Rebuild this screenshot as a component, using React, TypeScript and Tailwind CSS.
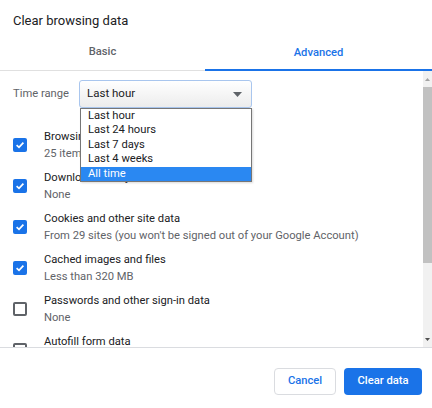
import React from 'react';

const rows = [
  { title: 'Browsing history', sub: '25 items', checked: true },
  { title: 'Download history', sub: 'None', checked: true },
  { title: 'Cookies and other site data', sub: "From 29 sites (you won't be signed out of your Google Account)", checked: true },
  { title: 'Cached images and files', sub: 'Less than 320 MB', checked: true },
  { title: 'Passwords and other sign-in data', sub: 'None', checked: false },
  { title: 'Autofill form data', sub: 'None', checked: false },
];

const options = ['Last hour', 'Last 24 hours', 'Last 7 days', 'Last 4 weeks', 'All time'];

function Checkbox({ checked }: { checked: boolean }) {
  if (!checked) {
    return <div className="w-[14px] h-[14px] rounded-[2px] border-2 border-[#5f6368] shrink-0" />;
  }
  return (
    <div className="w-[14px] h-[14px] rounded-[2px] bg-[#1a73e8] shrink-0 flex items-center justify-center">
      <svg width="10" height="10" viewBox="0 0 10 10">
        <path d="M1.6 5.2 L4 7.4 L8.4 2.6" fill="none" stroke="white" strokeWidth="1.7" />
      </svg>
    </div>
  );
}

export default function App() {
  return (
    <div className="w-[432px] h-[408px] bg-white relative overflow-hidden text-[#202124] font-['Roboto',sans-serif]">
      <div className="px-[13px] pt-[12px] h-[36px] text-[13px] leading-[18px]">Clear browsing data</div>

      {/* tabs */}
      <div className="flex h-[35px] border-b border-[#e0e0e0] text-[11.2px] font-medium">
        <div className="w-[205px] flex items-center justify-center text-[#5f6368] pb-[1px]">Basic</div>
        <div className="flex-1 flex items-center justify-center text-[#1a73e8] border-b-2 border-[#1a73e8] mb-[-1px] pt-[1px]">
          Advanced
        </div>
      </div>

      {/* scrolling body */}
      <div className="flex h-[277px] border-b border-[#dadce0]">
        <div className="flex-1 overflow-hidden relative">
          <div className="flex items-center pt-[9px] pl-[13px] h-[37px]">
            <span className="text-[11.2px] text-[#5f6368] w-[66px]">Time range</span>
            <div className="w-[173px] h-[28px] rounded-[3px] border border-[#a9c6ee] bg-gradient-to-b from-white to-[#ececec] flex items-center justify-between pl-[7px] pr-[9px] text-[11.5px]">
              <span>Last hour</span>
              <svg width="9" height="5" viewBox="0 0 9 5">
                <path d="M0 0 H9 L4.5 5 Z" fill="#5f6368" />
              </svg>
            </div>
          </div>

          <div className="mt-[16px]">
            {rows.map((r) => (
              <div key={r.title} className="flex items-center h-[41px] pl-[13px]">
                <Checkbox checked={r.checked} />
                <div className="ml-[17px] text-[11.2px] leading-[17px] whitespace-nowrap">
                  <div>{r.title}</div>
                  <div className="text-[#5f6368]">{r.sub}</div>
                </div>
              </div>
            ))}
          </div>

          {/* open native select popup */}
          <div className="absolute left-[80px] top-[37px] w-[172px] border border-[#767676] bg-white text-[11.2px] leading-[14.4px] shadow-[1px_1px_2px_rgba(0,0,0,0.15)]">
            {options.map((o, i) => (
              <div
                key={o}
                className={i === 4 ? 'pl-[7px] bg-[#2a88f2] text-white' : 'pl-[7px] text-[#202124]'}
              >
                {o}
              </div>
            ))}
          </div>
        </div>

        {/* scrollbar */}
        <div className="w-[9px] bg-[#f1f1f1] flex flex-col">
          <div className="h-[16px] flex items-center justify-center">
            <svg width="5" height="3" viewBox="0 0 5 3">
              <path d="M0 3 L2.5 0 L5 3 Z" fill="#a3a3a3" />
            </svg>
          </div>
          <div className="h-[176px] bg-[#c1c1c1]" />
          <div className="flex-1" />
          <div className="h-[16px] flex items-center justify-center">
            <svg width="5" height="3" viewBox="0 0 5 3">
              <path d="M0 0 L5 0 L2.5 3 Z" fill="#505050" />
            </svg>
          </div>
        </div>
      </div>

      {/* footer */}
      <div className="flex justify-end gap-[8px] pr-[10px] pt-[20px] text-[11.2px] font-medium">
        <button className="w-[62px] h-[27px] rounded-[4px] border border-[#dadce0] text-[#1a73e8] bg-white">Cancel</button>
        <button className="w-[78px] h-[27px] rounded-[4px] bg-[#1a73e8] text-white">Clear data</button>
      </div>
    </div>
  );
}
